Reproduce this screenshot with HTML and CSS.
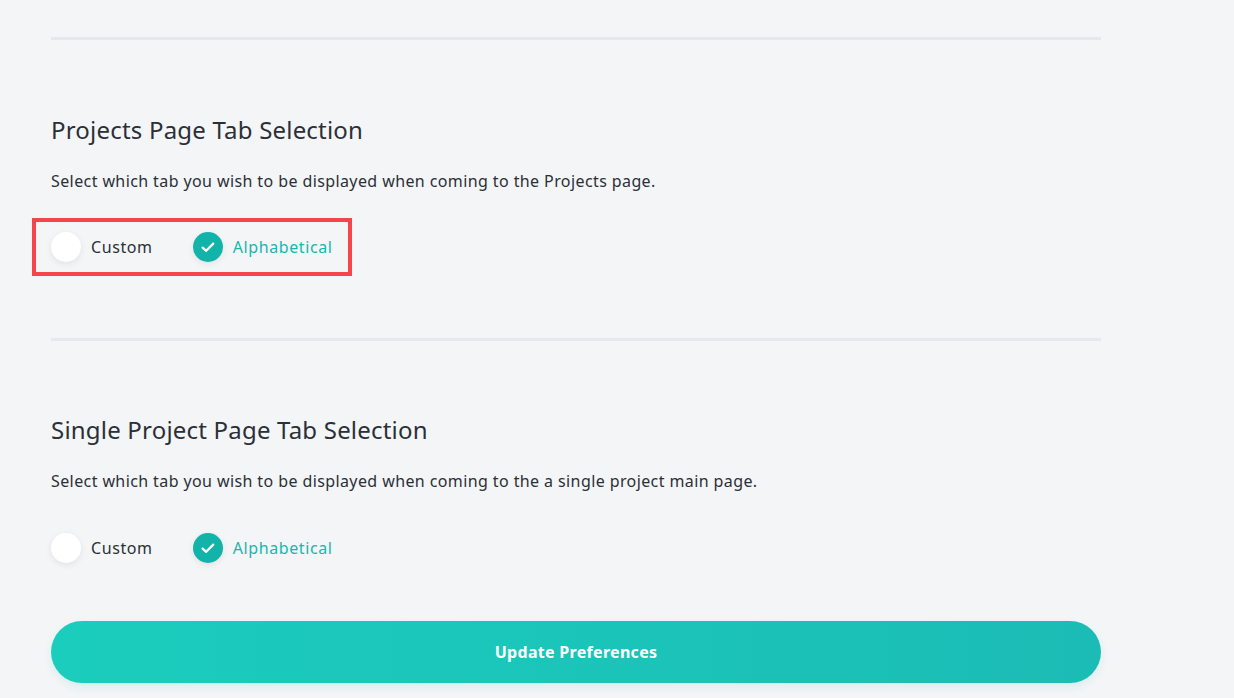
FILE: index.html
```html
<!DOCTYPE html>
<html lang="en">
<head>
<meta charset="utf-8">
<title>Preferences</title>
<link rel="stylesheet" href="styles.css">
</head>
<body>
<main class="page">
  <div class="divider"></div>
  <section class="pref">
    <h2 class="pref-title">Projects Page Tab Selection</h2>
    <p class="pref-desc">Select which tab you wish to be displayed when coming to the Projects page.</p>
    <div class="radios highlighted">
      <label class="radio">
        <span class="dot"></span>
        <span class="radio-label">Custom</span>
      </label>
      <label class="radio checked">
        <span class="dot"><svg viewBox="0 0 16 16" width="16" height="16"><path d="M2.6 8.6 L6.2 11.8 L13.2 4.6" fill="none" stroke="#fff" stroke-width="2.3" stroke-linecap="round" stroke-linejoin="round"/></svg></span>
        <span class="radio-label">Alphabetical</span>
      </label>
    </div>
  </section>
  <div class="divider"></div>
  <section class="pref second">
    <h2 class="pref-title">Single Project Page Tab Selection</h2>
    <p class="pref-desc">Select which tab you wish to be displayed when coming to the a single project main page.</p>
    <div class="radios">
      <label class="radio">
        <span class="dot"></span>
        <span class="radio-label">Custom</span>
      </label>
      <label class="radio checked">
        <span class="dot"><svg viewBox="0 0 16 16" width="16" height="16"><path d="M2.6 8.6 L6.2 11.8 L13.2 4.6" fill="none" stroke="#fff" stroke-width="2.3" stroke-linecap="round" stroke-linejoin="round"/></svg></span>
        <span class="radio-label">Alphabetical</span>
      </label>
    </div>
  </section>
  <button class="update-btn" type="button">Update Preferences</button>
</main>
</body>
</html>
```

FILE: styles.css
```css
* { box-sizing: border-box; }
html, body { margin: 0; padding: 0; }
body {
  background: #f4f5f7;
  font-family: "Noto Sans", "Open Sans", sans-serif;
  color: #2b3036;
  width: 1234px;
  height: 698px;
  overflow: hidden;
}
.page {
  width: 1050px;
  margin-left: 51px;
  padding-top: 37px;
}
.divider {
  height: 3px;
  background: #e6e8eb;
}
.pref {
  padding-top: 74px;
  padding-bottom: 62px;
}
.pref.second { padding-top: 73px; padding-bottom: 44px; }
.pref-title {
  margin: 0;
  font-size: 24px;
  line-height: 32px;
  font-weight: 400;
  letter-spacing: 0.2px;
  color: #2b3036;
}
.pref-desc {
  margin: 23px 0 0;
  font-size: 16px;
  line-height: 24px;
  letter-spacing: 0.4px;
  color: #2b3036;
}
.radios {
  display: inline-flex;
  align-items: center;
  gap: 40px;
  margin: 25px 0 0 -19px;
  padding: 10px 15px;
  border: 4px solid transparent;
}
.pref.second .radios { margin-top: 26px; }
.radios.highlighted { border-color: #f6454a; }
.radio {
  display: flex;
  align-items: center;
  gap: 10px;
  cursor: pointer;
}
.dot {
  width: 30px;
  height: 30px;
  border-radius: 50%;
  background: #ffffff;
  box-shadow: 0 2px 6px rgba(30, 40, 50, 0.09);
  display: flex;
  align-items: center;
  justify-content: center;
}
.radio.checked .dot { background: #12b3a8; }
.radio-label {
  font-size: 16px;
  line-height: 24px;
  letter-spacing: 0.6px;
  color: #2b3036;
}
.radio.checked .radio-label { color: #16b8ae; }
.update-btn {
  display: block;
  width: 1050px;
  height: 62px;
  border: 0;
  border-radius: 31px;
  background: linear-gradient(90deg, #1bcdbd 0%, #1bbcb5 100%);
  box-shadow: 0 4px 10px rgba(27, 188, 181, 0.12);
  color: #ffffff;
  font-family: "Noto Sans", "Open Sans", sans-serif;
  font-size: 16px;
  font-weight: 700;
  letter-spacing: 0.3px;
  cursor: pointer;
}
```
